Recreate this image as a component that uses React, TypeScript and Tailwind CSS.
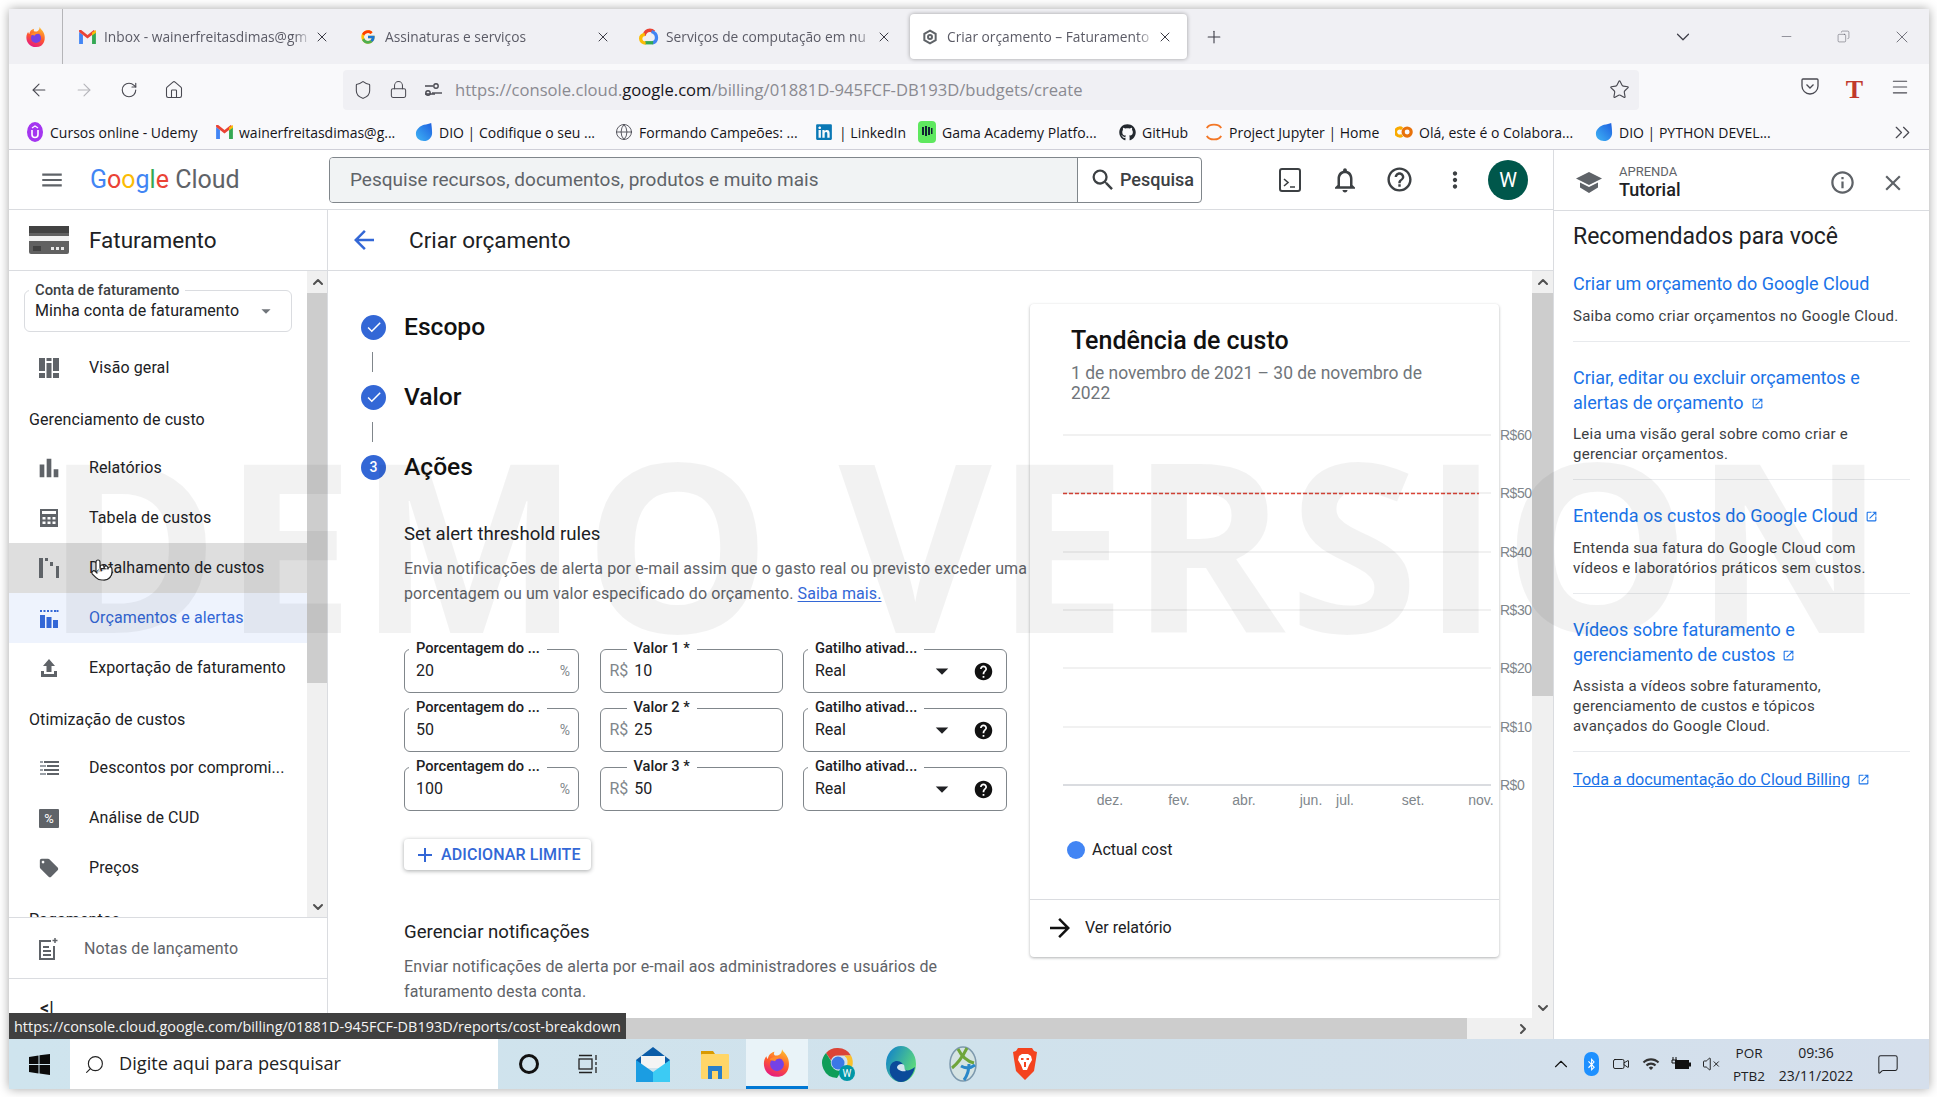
import React from "react";
import { ArrowLeft, ArrowRight, RotateCw, Home, Shield, Lock, Star, Menu, ChevronDown, ChevronUp, ChevronRight, ChevronsRight, Plus, X, Minus, Globe, Copy, Search, Video, VolumeX, MessageSquare, Pointer } from "lucide-react";
import { FcGoogle } from "react-icons/fc";
import { FaGithub, FaLinkedin, FaBluetoothB } from "react-icons/fa";
import { MdMenu, MdSearch, MdNotificationsNone, MdHelpOutline, MdMoreVert, MdArrowBack, MdArrowForward, MdCheck, MdAdd, MdHelp, MdArrowDropDown, MdInfoOutline, MdClose, MdOpenInNew, MdBarChart, MdLocalOffer, MdWifi } from "react-icons/md";

const Firefox = ({ s = 20 }: { s?: number }) => (
  <svg width={s} height={s} viewBox="0 0 24 24">
    <defs>
      <linearGradient id="ffg" x1="0.7" y1="0" x2="0.3" y2="1"><stop offset="0" stopColor="#ffbd2e" /><stop offset="0.5" stopColor="#ff5a2c" /><stop offset="1" stopColor="#e31587" /></linearGradient>
    </defs>
    <path fill="url(#ffg)" d="M16 1c1 2.500 3 3 4.500 6.500C23 13 21.500 23 12 23 5 23 1.500 17.500 1.500 12.500c0-2.500.8-4.500 2-6 .2 1 .6 1.800 1.200 2.300C5 6 7 3.500 10 3c-.8 1.500-.5 2.500.5 3 2.500.5 5.500-1 5.500-5z" />
    <circle cx="12" cy="13" r="5.500" fill="#7542e5" />
    <path fill="#ff8a2c" d="M6 9c2-2 7-3 10-.5-3-.5-5 .5-5.500 2C9 10 7 10 6 9z" />
  </svg>
);
const Gmail = () => (
  <svg width="17" height="14" viewBox="0 0 24 20">
    <path fill="#4285f4" d="M0 3v17h5.500V7z" />
    <path fill="#34a853" d="M24 3v17h-5.500V7z" />
    <path fill="#ea4335" d="M0 3l12 9 12-9-3-3-9 7-9-7-3 0z" />
    <path fill="#fbbc04" d="M18.500 3.500L24 0v4l-5.500 4z" />
  </svg>
);
const CloudLogo = () => (
  <svg width="20" height="17" viewBox="0 0 24 20" fill="none" strokeWidth="4">
    <path stroke="#ea4335" d="M6 9c1-4 4-6.500 7-6.500 2 0 4 1 5 2" />
    <path stroke="#4285f4" d="M15 4c3.500 1 6 3.500 6 7.500 0 3-2 5.500-5 6" />
    <path stroke="#34a853" d="M17 17.500H7" />
    <path stroke="#fbbc04" d="M8 18C4.500 18 2 15.500 2 12.500 2 10 4 8 7 7.500" />
  </svg>
);
const HexGear = () => (
  <svg width="16" height="16" viewBox="0 0 24 24" fill="none" stroke="#5f6368" strokeWidth="3">
    <path d="M12 2.500l8.500 4.800v9.400L12 21.500l-8.500-4.800V7.300z" />
    <circle cx="12" cy="12" r="3" />
  </svg>
);
const Udemy = () => (
  <svg width="16" height="22" viewBox="0 0 16 22">
    <ellipse cx="8" cy="11" rx="8" ry="10" fill="#a435f0" />
    <path d="M5 9v4.500a3 3 0 0 0 6 0V9" fill="none" stroke="#fff" strokeWidth="1.600" />
    <path d="M5 7l3-2 3 2" fill="none" stroke="#fff" strokeWidth="1.200" />
  </svg>
);
const Dio = () => (
  <svg width="20" height="22" viewBox="0 0 20 22">
    <defs><linearGradient id="diog" x1="1" y1="0" x2="0" y2="1"><stop offset="0" stopColor="#1e5fe0" /><stop offset="1" stopColor="#3fb5f5" /></linearGradient></defs>
    <path fill="url(#diog)" d="M18 1c0 0 1 6 1 11 0 5-4 9-9 9S1 18 1 13s5-9 9-10c3-.7 6-1 8-2z" />
  </svg>
);
const Gama = () => (
  <svg width="18" height="22" viewBox="0 0 18 22">
    <rect x="0" y="0" width="18" height="22" rx="4" fill="#5fe85f" />
    <rect x="4" y="6" width="2" height="8" fill="#123" /><rect x="7" y="5" width="2" height="10" fill="#123" /><rect x="10" y="6" width="2" height="8" fill="#123" /><rect x="13" y="7" width="1.500" height="6" fill="#123" />
  </svg>
);
const Jupyter = () => (
  <svg width="19" height="22" viewBox="0 0 19 22" fill="none">
    <path d="M2 7c2-5 13-5 15 0" stroke="#f37726" strokeWidth="2" />
    <path d="M2 15c2 5 13 5 15 0" stroke="#f37726" strokeWidth="2" />
  </svg>
);
const Colab = () => (
  <svg width="20" height="14" viewBox="0 0 20 14" fill="none" strokeWidth="3.500">
    <path d="M8 3.500a4.500 4.500 0 1 0 0 7" stroke="#f9ab00" />
    <circle cx="13.500" cy="7" r="4.500" stroke="#e8710a" />
  </svg>
);
const Chrome = () => (
  <svg width="34" height="34" viewBox="0 0 34 34">
    <path fill="#db4437" d="M16 1a15 15 0 0 1 13 7.500H16a7 7 0 0 0-7 5L4 6a15 15 0 0 1 12-5z" />
    <path fill="#fbc02d" d="M29 8.500a15 15 0 0 1 1 12L24 20a8 8 0 0 0-2-11.500z" />
    <path fill="#0f9d58" d="M4 6a15 15 0 0 0 11 25l5-8a8 8 0 0 1-11-9z" />
    <circle cx="16" cy="16" r="6.500" fill="#3b78e7" />
    <circle cx="25" cy="26" r="8" fill="#0097a7" />
    <text x="25" y="30" fontSize="10" fill="#fff" textAnchor="middle" fontFamily="Roboto">W</text>
  </svg>
);
const Edge = () => (
  <svg width="32" height="38" viewBox="0 0 32 38">
    <defs><linearGradient id="edg" x1="0" y1="0" x2="1" y2="0.6"><stop offset="0" stopColor="#0c7bd0" /><stop offset="1" stopColor="#5fdc7a" /></linearGradient></defs>
    <ellipse cx="16" cy="19" rx="15" ry="18" fill="url(#edg)" />
    <path fill="#0b4a9a" d="M5 22c1-6 8-8 12-4 2 3 1 6 3 7 3 1 6 0 10-3-2 9-8 15-14 15C10 37 3 30 5 22z" />
    <path fill="#d3e4ee" d="M12 22c1-3 5-4 7-2 1 3 0 4 2 6-4 1-9-1-9-4z" />
  </svg>
);
const GlobeApp = () => (
  <svg width="28" height="36" viewBox="0 0 28 36" fill="none">
    <ellipse cx="14" cy="18" rx="13" ry="17" fill="#d5e3e3" stroke="#7d99ad" strokeWidth="1.500" />
    <path d="M3 22C8 18 14 10 18 2" stroke="#6fa53a" strokeWidth="3" />
    <path d="M9 3c3 6 8 12 16 14" stroke="#6fa53a" strokeWidth="3" />
    <path d="M12 20c5 3 10 2 14-1M20 18c0 6-2 12-5 16" stroke="#2b88c9" strokeWidth="3" />
  </svg>
);
const Brave = () => (
  <svg width="26" height="34" viewBox="0 0 26 34">
    <path fill="#f4431f" d="M6 1h14l2 3 3 1-1 7-2 12-9 9-9-9-2-12-1-7 3-1z" />
    <path fill="#fff" d="M7 9l3-2h6l3 2 1 4-3 5-2 5h-4l-2-5-3-5z" />
    <path fill="#f4431f" d="M9 11h2.500v2H9zM14.500 11H17v2h-2.500zM12 15h2v5h-2z" />
  </svg>
);
const MailApp = () => (
  <svg width="34" height="36" viewBox="0 0 34 36">
    <path fill="#0a5ca8" d="M0 14L17 1l17 13v4H0z" />
    <path fill="#f4f4f4" d="M5 10h24v12H5z" />
    <path fill="#1b9de2" d="M0 14l17 12v10H0z" />
    <path fill="#3ccbf4" d="M34 14L17 26v10h17z" />
  </svg>
);
const FolderApp = () => (
  <svg width="28" height="30" viewBox="0 0 28 30">
    <path fill="#d99a00" d="M0 2h12l2 3h0v3H0z" />
    <rect x="0" y="5" width="28" height="25" rx="1" fill="#ffd668" />
    <path fill="#2a7fc9" d="M7 17h14v13h-4v-8h-6v8H7z" />
  </svg>
);
const WinLogo = () => (
  <svg width="21" height="21" viewBox="0 0 21 21"><path fill="#0b0b0b" d="M0 3l9.500-1.500v8.500H0zM10.500 1.300L21 0v10h-10.500zM0 11h9.500v8.500L0 18zM10.500 11H21v10l-10.500-1.500z" /></svg>
);
const Bar = ({ x, y, w, h, c = "#5f6368" }: { x: number; y: number; w: number; h: number; c?: string }) => <rect x={x} y={y} width={w} height={h} fill={c} />;
const IcOverview = () => (
  <svg width="24" height="24" viewBox="0 0 24 24"><Bar x={2} y={2} w={6} h={13} /><Bar x={2} y={17} w={6} h={5} /><Bar x={9.500} y={2} w={5} h={3} /><Bar x={9.500} y={7} w={5} h={15} /><Bar x={16} y={2} w={6} h={13} /><Bar x={16} y={17} w={6} h={5} /></svg>
);
const IcCalc = () => (
  <svg width="24" height="24" viewBox="0 0 24 24"><Bar x={3} y={3} w={18} h={18} /><Bar x={5} y={5} w={14} h={3} c="#fff" /><Bar x={5.500} y={11} w={3} h={2.500} c="#fff" /><Bar x={10.500} y={11} w={3} h={2.500} c="#fff" /><Bar x={15.500} y={11} w={3} h={2.500} c="#fff" /><Bar x={5.500} y={15.500} w={3} h={2.500} c="#fff" /><Bar x={10.500} y={15.500} w={3} h={2.500} c="#fff" /><Bar x={15.500} y={15.500} w={3} h={2.500} c="#fff" /></svg>
);
const IcWaterfall = () => (
  <svg width="24" height="24" viewBox="0 0 24 24"><Bar x={2} y={2} w={4} h={20} /><Bar x={8} y={2} w={3} h={3} /><Bar x={13} y={6} w={3} h={4} /><Bar x={19} y={10} w={3} h={12} /></svg>
);
const IcBudget = () => (
  <svg width="24" height="24" viewBox="0 0 24 24"><Bar x={3} y={9} w={5} h={13} c="#3367d6" /><Bar x={9.500} y={11} w={5} h={11} c="#3367d6" /><Bar x={16} y={14} w={5} h={8} c="#3367d6" />{[3, 6.500, 10, 13.500, 17, 19.500].map((x) => <Bar key={x} x={x} y={4} w={2} h={2} c="#3367d6" />)}</svg>
);
const IcExport = () => (
  <svg width="24" height="24" viewBox="0 0 24 24"><path fill="#5f6368" d="M12 3l6 7h-3.500v6h-5v-6H6z" /><path fill="#5f6368" d="M4 15h3v3h10v-3h3v6H4z" /></svg>
);
const IcList = () => (
  <svg width="24" height="24" viewBox="0 0 24 24"><Bar x={7} y={5} w={15} h={2} /><Bar x={10} y={9} w={12} h={2} /><Bar x={7} y={13} w={15} h={2} /><Bar x={10} y={17} w={12} h={2} /><Bar x={3} y={5} w={3} h={2} c="#9aa0a6" /><Bar x={3} y={9} w={6} h={2} c="#9aa0a6" /><Bar x={3} y={13} w={3} h={2} c="#9aa0a6" /><Bar x={3} y={17} w={6} h={2} c="#9aa0a6" /></svg>
);
const IcNotes = () => (
  <svg width="22" height="24" viewBox="0 0 22 24" fill="none" stroke="#5f6368" strokeWidth="2"><path d="M14 4H3v18h14V9" /><path d="M6 10h6M6 14h8M6 18h8" /><path d="M18 1v5M15.500 3.500h5" strokeWidth="1.500" /></svg>
);
const IcBilling = () => (
  <svg width="40" height="28" viewBox="0 0 40 28">
    <rect x="0" y="0" width="40" height="28" rx="2" fill="#616161" />
    <rect x="0" y="0" width="40" height="7" fill="#424242" />
    <rect x="0" y="10" width="40" height="5" fill="#f1f1f1" />
    <rect x="4" y="20" width="8" height="5" fill="#424242" />
    <rect x="22" y="21" width="3" height="3" fill="#e8e8e8" /><rect x="27" y="21" width="3" height="3" fill="#e8e8e8" /><rect x="32" y="21" width="3" height="3" fill="#e8e8e8" />
  </svg>
);
const IcSchool = () => (
  <svg width="28" height="24" viewBox="0 0 28 24"><path fill="#5f6368" d="M14 1L1 7.500 14 14l13-6.500z" /><path fill="#5f6368" d="M5 11.500l9 4.500 9-4.500v5L14 22l-9-5.500z" /></svg>
);
const IcTerminal = () => (
  <svg width="24" height="26" viewBox="0 0 24 26" fill="none" stroke="#3c4043" strokeWidth="2"><rect x="2" y="2" width="20" height="22" rx="2" /><path d="M6 12l4 3.500-4 3.500M12 20h5" strokeWidth="1.600" /></svg>
);
const Ext = () => <MdOpenInNew className="inline-block ml-[7px] align-[-1px]" size={13} />;

const tabs = [
  { t: "Inbox - wainerfreitasdimas@gm", i: <Gmail /> },
  { t: "Assinaturas e serviços", i: <FcGoogle size={16} /> },
  { t: "Serviços de computação em nu", i: <CloudLogo /> },
];

function TabBar() {
  return (
    <div className="flex h-[55px] items-center bg-[#f0f0f4] text-[#5b5b66] [font-family:'Open_Sans',sans-serif] text-[13.750px]">
      <div className="flex h-full w-[54px] items-center justify-center border-r border-[#b5b5b8]"><Firefox s={22} /></div>
      <div className="flex ml-[4px] gap-[4px]">
        {tabs.map((x) => (
          <div key={x.t} className="flex h-[45px] w-[277px] items-center">
            <div className="flex w-[40px] justify-center shrink-0">{x.i}</div>
            <div className="w-[208px] whitespace-nowrap overflow-hidden ml-[-3px] pt-[1px] [mask-image:linear-gradient(to_right,black_190px,transparent)]">{x.t}</div>
            <X size={16} className="ml-[2px] text-[#3b3b45]" strokeWidth={1.500} />
          </div>
        ))}
        <div className="flex h-[45px] w-[277px] items-center rounded-[4px] bg-white shadow-[0_0_4px_rgba(0,0,0,0.35)]">
          <div className="flex w-[40px] justify-center shrink-0"><HexGear /></div>
          <div className="w-[208px] whitespace-nowrap overflow-hidden ml-[-3px] pt-[1px] [mask-image:linear-gradient(to_right,black_190px,transparent)]">Criar orçamento – Faturamento</div>
          <X size={16} className="ml-[2px] text-[#3b3b45]" strokeWidth={1.500} />
        </div>
      </div>
      <Plus size={20} strokeWidth={1.300} className="ml-[17px] text-[#3b3b45]" />
      <ChevronDown size={22} strokeWidth={1.300} className="ml-[448px] text-[#3b3b45]" />
      <Minus size={15} strokeWidth={1} className="ml-[85px] text-[#5b5b66]" />
      <Copy size={13} strokeWidth={1} className="ml-[43px] text-[#5b5b66] -scale-x-100" />
      <X size={20} strokeWidth={1} className="ml-[42px] text-[#5b5b66]" />
    </div>
  );
}

function NavBar() {
  const sl = "flex w-[45px] justify-center text-[#4a4a52]";
  return (
    <div className="flex h-[51px] items-center bg-[#f9f9fb] pl-[7px] pr-[7px] [font-family:'Open_Sans',sans-serif]">
      <div className={sl}><ArrowLeft size={20} strokeWidth={1.300} /></div>
      <div className={sl}><ArrowRight size={20} strokeWidth={1.300} className="text-[#b5b5ba]" /></div>
      <div className={sl}><RotateCw size={18} strokeWidth={1.500} /></div>
      <div className={sl}><Home size={20} strokeWidth={1.300} /></div>
      <div className="ml-[147px] flex h-[40px] w-[1296px] items-center rounded-[4px] bg-[#f0f0f4] pl-[10px] pr-[9px] text-[16.600px]">
        <Shield size={20} strokeWidth={1.300} className="text-[#4a4a52]" />
        <Lock size={19} strokeWidth={1.300} className="ml-[16px] text-[#4a4a52]" />
        <svg width="20" height="16" viewBox="0 0 20 16" fill="none" stroke="#4a4a52" strokeWidth="1.400" className="ml-[16px]"><circle cx="12" cy="4" r="2.200" /><path d="M1 4h8M1 12h10" /><circle cx="4" cy="11" r="2.200" /><path d="M8 11h10" /></svg>
        <div className="ml-[11px] pt-[1px] text-[#8a8a91] whitespace-nowrap">https://console.cloud.<span className="text-[#15141a]">google.com</span>/billing/01881D-945FCF-DB193D/budgets/create</div>
        <Star size={21} strokeWidth={1.300} className="ml-auto text-[#4a4a52]" />
      </div>
      <div className="ml-auto flex">
        <div className={sl}><svg width="18" height="18" viewBox="0 0 18 18" fill="none" stroke="#4a4a52" strokeWidth="1.300"><path d="M2 2h14a1 1 0 0 1 1 1v6a8 8 0 0 1-16 0V3a1 1 0 0 1 1-1z" /><path d="M5.500 7.500L9 11l3.500-3.500" /></svg></div>
        <div className={sl}><span className="[font-family:'Liberation_Serif',serif] text-[26px] leading-none text-[#c0392b] font-bold">T</span></div>
        <div className={sl}><Menu size={20} strokeWidth={1.300} /></div>
      </div>
    </div>
  );
}

const bookmarks = [
  { w: "w-[189px]", i: <Udemy />, t: "Cursos online - Udemy" },
  { w: "w-[200px]", i: <Gmail />, t: "wainerfreitasdimas@g..." },
  { w: "w-[200px]", i: <Dio />, t: "DIO | Codifique o seu ..." },
  { w: "w-[200px]", i: <Globe size={18} strokeWidth={1.200} className="text-[#4a4a52]" />, t: "Formando Campeões: ..." },
  { w: "w-[103px]", i: <FaLinkedin size={18} className="text-[#0a78b5]" />, t: "| LinkedIn" },
  { w: "w-[200px]", i: <Gama />, t: "Gama Academy Platfo..." },
  { w: "w-[87px]", i: <FaGithub size={17} className="text-[#24292f]" />, t: "GitHub" },
  { w: "w-[190px]", i: <Jupyter />, t: "Project Jupyter | Home" },
  { w: "w-[200px]", i: <Colab />, t: "Olá, este é o Colabora..." },
  { w: "w-[200px]", i: <Dio />, t: "DIO | PYTHON DEVEL..." },
];

function Bookmarks() {
  return (
    <div className="flex h-[35px] items-center border-b border-[#cfcfd8] bg-[#f9f9fb] pl-[17px] pr-[14px] text-[14px] text-[#15141a] [font-family:'Open_Sans',sans-serif]">
      {bookmarks.map((b, i) => (
        <div key={i} className={"flex items-center whitespace-nowrap " + b.w}>
          <div className="flex w-[18px] shrink-0 justify-center">{b.i}</div>
          <span className="ml-[6px]">{b.t}</span>
        </div>
      ))}
      <ChevronsRight size={25} strokeWidth={1.200} className="ml-auto text-[#4a4a52]" />
    </div>
  );
}

const NavRow = ({ icon, text, active, hover }: { icon: React.ReactNode; text: string; active?: boolean; hover?: boolean }) => (
  <div className={"flex h-[50px] shrink-0 items-center " + (active ? "bg-[#eef3fd] text-[#3367d6]" : hover ? "bg-[#dedede] text-[#202124]" : "text-[#202124]")}>
    <div className="flex w-[80px] shrink-0 justify-center">{icon}</div>
    <span className="whitespace-nowrap">{text}</span>
  </div>
);

const SectionHead = ({ text }: { text: string }) => (
  <div className="flex h-[50px] shrink-0 items-center pl-[20px] pt-[4px] whitespace-nowrap text-[#202124]">{text}</div>
);

const ScrollV = ({ thumb }: { thumb: string }) => (
  <div className="flex w-[21px] shrink-0 flex-col bg-[#f0f0f0]">
    <div className="flex h-[22px] shrink-0 items-center justify-center"><ChevronUp size={16} strokeWidth={3} className="text-[#505050]" /></div>
    <div className={"shrink-0 bg-[#cdcdcd] " + thumb} />
    <div className="flex flex-1 items-end justify-center pb-[2px]"><ChevronDown size={16} strokeWidth={3} className="text-[#505050]" /></div>
  </div>
);

function Sidebar() {
  return (
    <div className="flex w-[319px] shrink-0 flex-col border-r border-[#dadce0] text-[16px] tracking-[0.100px]">
      <div className="flex h-[61px] shrink-0 items-center border-b border-[#dadce0] pl-[20px]">
        <IcBilling />
        <span className="ml-[20px] pt-[2px] text-[22.500px] tracking-normal text-[#202124]">Faturamento</span>
      </div>
      <div className="flex h-[646px] shrink-0 overflow-hidden">
        <div className="flex w-[298px] shrink-0 flex-col overflow-hidden">
          <div className="relative mx-[15px] mt-[19px] mb-[11px] h-[42px] shrink-0 rounded-[6px] border border-[#dadce0]">
            <span className="absolute left-[4px] top-[-10px] whitespace-nowrap bg-white px-[6px] text-[14.800px] tracking-normal font-medium leading-[18px] text-[#3c4043]">Conta de faturamento</span>
            <div className="flex h-full items-center pl-[10px] pr-[14px] text-[#202124]">
              Minha conta de faturamento
              <MdArrowDropDown size={22} className="ml-auto text-[#70757a]" />
            </div>
          </div>
          <NavRow icon={<IcOverview />} text="Visão geral" />
          <SectionHead text="Gerenciamento de custo" />
          <NavRow icon={<MdBarChart size={28} color="#5f6368" />} text="Relatórios" />
          <NavRow icon={<IcCalc />} text="Tabela de custos" />
          <NavRow icon={<IcWaterfall />} text="Detalhamento de custos" hover />
          <NavRow icon={<IcBudget />} text="Orçamentos e alertas" active />
          <NavRow icon={<IcExport />} text="Exportação de faturamento" />
          <SectionHead text="Otimização de custos" />
          <NavRow icon={<IcList />} text="Descontos por compromi..." />
          <NavRow icon={<div className="flex h-[19px] w-[20px] items-center justify-center rounded-[1px] bg-[#5f6368] text-[13px] leading-none text-white">%</div>} text="Análise de CUD" />
          <NavRow icon={<MdLocalOffer size={22} color="#5f6368" />} text="Preços" />
          <SectionHead text="Pagamentos" />
        </div>
        <ScrollV thumb="h-[390px]" />
      </div>
      <div className="flex h-[62px] shrink-0 items-center border-y border-[#dadce0] pt-[1px] text-[#5f6368]">
        <div className="flex w-[75px] justify-center pl-[3px]"><IcNotes /></div>
        Notas de lançamento
      </div>
      <div className="flex-1 pl-[31px] pt-[20px] text-[18px] leading-none text-[#202124]">
        <span className="font-medium">&lt;|</span>
      </div>
    </div>
  );
}

const Field = ({ label, notch, pre, val, suf, sel }: { label: string; notch: string; pre?: string; val: string; suf?: string; sel?: boolean }) => (
  <div className="relative flex h-[44px] items-center rounded-[6px] border border-[#80868b] text-[16px] text-[#202124]">
    <span className={"absolute top-[-11px] whitespace-nowrap bg-white px-[7px] text-[14.650px] font-medium leading-[18px] " + notch}>{label}</span>
    {pre && <span className="ml-[9px] text-[#80868b]">{pre}</span>}
    <span className={pre ? "ml-[6px]" : "ml-[11px]"}>{val}</span>
    {suf && <span className="ml-auto mr-[8px] text-[#80868b] text-[14px]">{suf}</span>}
    {sel && <MdArrowDropDown size={30} className="ml-auto text-[#202124]" />}
    {sel && <MdHelp size={21} className="ml-[16px] mr-[12px] text-[#111]" />}
  </div>
);

const Step = ({ n, title, line }: { n?: string; title: string; line?: boolean }) => (
  <div>
    <div className="flex h-[24px] items-center">
      <div className="flex h-[25px] w-[25px] items-center justify-center rounded-full bg-[#3367d6] text-[14px] font-medium text-white">
        {n ? n : <MdCheck size={18} color="#fff" />}
      </div>
      <span className="ml-[18px] text-[24.600px] font-medium text-[#111]">{title}</span>
    </div>
    {line && <div className="ml-[11px] mt-[13px] mb-[13px] h-[20px] w-px bg-[#80868b]" />}
  </div>
);

function Form() {
  return (
    <div className="w-[702px] shrink-0 pl-[33px] pt-[44px]">
      <Step title="Escopo" line />
      <Step title="Valor" line />
      <Step n="3" title="Ações" />
      <div className="ml-[43px] mt-[43px] text-[18.600px] leading-[24px] text-[#202124] whitespace-nowrap">Set alert threshold rules</div>
      <div className="ml-[43px] mt-[10px] w-[640px] text-[16px] leading-[25px] tracking-[0.100px] text-[#5f6368] whitespace-nowrap">
        Envia notificações de alerta por e-mail assim que o gasto real ou previsto exceder uma<br />
        porcentagem ou um valor especificado do orçamento. <span className="text-[#3367d6] underline underline-offset-2">Saiba mais.</span>
      </div>
      <div className="ml-[43px] mt-[43px] grid grid-cols-[175px_183px_204px] gap-x-[20.500px] gap-y-[15px]">
        {[["20", "1", "10"], ["50", "2", "25"], ["100", "3", "50"]].flatMap(([p, n, v]) => [
          <Field key={p + "a"} label="Porcentagem do ..." notch="left-[4px]" val={p} suf="%" />,
          <Field key={p + "b"} label={"Valor " + n + " *"} notch="left-[26px]" pre="R$" val={v} />,
          <Field key={p + "c"} label="Gatilho ativad..." notch="left-[4px]" val="Real" sel />,
        ])}
      </div>
      <div className="ml-[43px] mt-[28px] flex h-[31px] w-[187px] items-center rounded-[4px] bg-white text-[16px] font-medium tracking-[0.100px] text-[#3367d6] shadow-[0_1px_4px_rgba(60,64,67,0.45)]">
        <MdAdd size={24} className="ml-[9px]" />
        <span className="ml-[4px] whitespace-nowrap">ADICIONAR LIMITE</span>
      </div>
      <div className="ml-[43px] mt-[50px] text-[18.600px] leading-[24px] text-[#202124]">Gerenciar notificações</div>
      <div className="ml-[43px] mt-[10px] text-[16px] leading-[25px] tracking-[0.100px] text-[#5f6368] whitespace-nowrap">
        Enviar notificações de alerta por e-mail aos administradores e usuários de<br />faturamento desta conta.
      </div>
    </div>
  );
}

function Chart() {
  const ys = [[15, "R$60"], [73, "R$50"], [132, "R$40"], [190, "R$30"], [248, "R$20"], [307, "R$10"], [365, "R$0"]] as [number, string][];
  const xs = [[80, "dez."], [149, "fev."], [214, "abr."], [281, "jun."], [315, "jul."], [383, "set."], [451, "nov."]] as [number, string][];
  return (
    <svg width="510" height="400" viewBox="0 0 510 400" className="mt-[17px] block overflow-visible [font-family:'Liberation_Sans',sans-serif]">
      {ys.map(([y, l]) => (
        <g key={l}>
          <line x1="33" x2="461" y1={y} y2={y} stroke={l === "R$0" ? "#dadce0" : "#ececec"} strokeWidth={l === "R$0" ? 2 : 1.500} />
          <text x="470" y={y + 5} fontSize="14" letterSpacing="-0.5" fill="#80868b">{l}</text>
        </g>
      ))}
      <line x1="33" x2="449" y1="73.500" y2="73.500" stroke="#db4437" strokeWidth="1.300" strokeDasharray="4 2" />
      {xs.map(([x, l]) => <text key={l} x={x} y="385" fontSize="14" fill="#80868b" textAnchor="middle">{l}</text>)}
    </svg>
  );
}

function Card() {
  return (
    <div className="mt-[33px] flex h-[653px] w-[469px] shrink-0 flex-col rounded-[4px] bg-white shadow-[0_1px_3px_rgba(60,64,67,0.4)]">
      <div className="pl-[41px] pt-[21px] pr-[30px]">
        <div className="text-[25px] font-medium leading-[32px] text-[#111]">Tendência de custo</div>
        <div className="mt-[6px] text-[17.450px] leading-[20px] text-[#70757a]">1 de novembro de 2021 – 30 de novembro de<br />2022</div>
      </div>
      <Chart />
      <div className="mt-[18px] flex h-[24px] items-center pl-[37px] text-[16px] text-[#202124]">
        <div className="h-[18px] w-[18px] rounded-full bg-[#4285f4]" />
        <span className="ml-[7px]">Actual cost</span>
      </div>
      <div className="mt-auto flex h-[58px] items-center border-t border-[#dadce0] pb-[2px] pl-[15px] text-[16px] text-[#202124]">
        <MdArrowForward size={30} color="#111" />
        <span className="ml-[10px]">Ver relatório</span>
      </div>
    </div>
  );
}

function Main() {
  return (
    <div className="flex min-w-0 flex-1 flex-col">
      <div className="flex h-[61px] shrink-0 items-center border-b border-[#dadce0] pl-[21px]">
        <MdArrowBack size={30} color="#3367d6" />
        <span className="ml-[30px] pt-[2px] text-[22.500px] text-[#202124]">Criar orçamento</span>
      </div>
      <div className="flex h-[747px] shrink-0">
        <div className="flex min-w-0 flex-1 overflow-hidden">
          <Form />
          <Card />
        </div>
        <ScrollV thumb="h-[403px]" />
      </div>
      <div className="flex h-[21px] shrink-0 bg-[#f0f0f0]">
        <div className="w-[1139px] bg-[#cdcdcd]" />
        <div className="ml-auto flex w-[60px] items-center justify-center"><ChevronRight size={16} strokeWidth={3} className="text-[#505050]" /></div>
      </div>
    </div>
  );
}

function HelpItem({ link, desc }: { link: React.ReactNode; desc: React.ReactNode }) {
  return (
    <div className="border-b border-[#e8eaed] pb-[15px] pt-[23px]">
      <div className="text-[18px] leading-[25px] text-[#1a73e8]">{link}</div>
      <div className="mt-[9.500px] text-[15px] leading-[20px] tracking-[0.250px] text-[#3c4043] whitespace-nowrap">{desc}</div>
    </div>
  );
}

function Panel() {
  return (
    <div className="flex w-[376px] shrink-0 flex-col border-l border-[#dadce0]">
      <div className="flex h-[61px] shrink-0 items-center border-b border-[#dadce0] pl-[21px] pt-[5px]">
        <IcSchool />
        <div className="ml-[16px] leading-none">
          <div className="text-[13px] leading-[15px] text-[#5f6368]">APRENDA</div>
          <div className="text-[18px] leading-[22px] font-medium text-[#202124]">Tutorial</div>
        </div>
        <MdInfoOutline size={27} color="#5f6368" className="ml-auto" />
        <MdClose size={26} color="#5f6368" className="ml-[24px] mr-[23px]" />
      </div>
      <div className="px-[19px]">
        <div className="mt-[12px] whitespace-nowrap text-[23px] leading-[28px] text-[#202124]">Recomendados para você</div>
        <div className="-mt-[3px]">
          <HelpItem link="Criar um orçamento do Google Cloud" desc="Saiba como criar orçamentos no Google Cloud." />
          <HelpItem link={<>Criar, editar ou excluir orçamentos e<br />alertas de orçamento<Ext /></>} desc={<>Leia uma visão geral sobre como criar e<br />gerenciar orçamentos.</>} />
          <HelpItem link={<>Entenda os custos do Google Cloud<Ext /></>} desc={<>Entenda sua fatura do Google Cloud com<br />vídeos e laboratórios práticos sem custos.</>} />
          <HelpItem link={<>Vídeos sobre faturamento e<br />gerenciamento de custos<Ext /></>} desc={<>Assista a vídeos sobre faturamento,<br />gerenciamento de custos e tópicos<br />avançados do Google Cloud.</>} />
        </div>
        <div className="mt-[16px] text-[16.200px] leading-[24px] text-[#1a73e8]"><span className="underline">Toda a documentação do Cloud Billing</span><Ext /></div>
      </div>
    </div>
  );
}

function TopBar() {
  return (
    <div className="flex h-[60px] shrink-0 items-center border-b border-[#dadce0] pl-[30px]">
      <MdMenu size={26} color="#5f6368" />
      <div className="ml-[25px] w-[161px] whitespace-nowrap text-[25px]">
        <span className="text-[#4285f4]">G</span><span className="text-[#ea4335]">o</span><span className="text-[#fbbc04]">o</span><span className="text-[#4285f4]">g</span><span className="text-[#34a853]">l</span><span className="text-[#ea4335]">e</span><span className="text-[#5f6368]"> Cloud</span>
      </div>
      <div className="ml-[78px] flex h-[46px] w-[873px] overflow-hidden rounded-[4px] border border-[#80868b]">
        <div className="flex flex-1 items-center border-r border-[#80868b] bg-[#f1f3f4] pl-[20px] pt-[1px] text-[19px] text-[#5f6368]">Pesquise recursos, documentos, produtos e muito mais</div>
        <div className="flex w-[123px] items-center pl-[11px] text-[18px] font-medium text-[#3c4043]">
          <MdSearch size={28} />
          <span className="ml-[3px]">Pesquisa</span>
        </div>
      </div>
      <div className="ml-[76px]"><IcTerminal /></div>
      <MdNotificationsNone size={30} color="#3c4043" className="ml-[28px]" />
      <MdHelpOutline size={29} color="#3c4043" className="ml-[25px]" />
      <MdMoreVert size={26} color="#3c4043" className="ml-[28px]" />
      <div className="ml-[20px] flex h-[40px] w-[40px] items-center justify-center rounded-full bg-[#00574b] text-[20px] text-white">W</div>
    </div>
  );
}

function Taskbar() {
  const slot = "flex h-full w-[62px] items-center justify-center";
  const tray = "flex h-full w-[30px] items-center justify-center text-[#111]";
  return (
    <div className="flex h-[50px] shrink-0 items-center bg-[linear-gradient(90deg,#cfe4ee,#d0e2ec_50%,#d5dfec)] [font-family:'Open_Sans',sans-serif] text-[#202124]">
      <div className="flex h-full w-[61px] items-center justify-center"><WinLogo /></div>
      <div className="flex h-full w-[428px] items-center bg-white pl-[14px] text-[#222]">
        <Search size={21} strokeWidth={1.300} className="-scale-x-100" />
        <span className="ml-[14px] text-[18.200px]">Digite aqui para pesquisar</span>
      </div>
      <div className={slot}><div className="h-[20px] w-[20px] rounded-full border-[3px] border-[#111]" /></div>
      <div className="flex h-full w-[56px] items-center justify-center">
        <svg width="22" height="22" viewBox="0 0 22 22" fill="none" stroke="#222" strokeWidth="1.300"><rect x="2" y="6" width="13" height="10" /><path d="M2 2.500h13M2 19.500h13M19 2v5M19 9v3M19 14v6" /></svg>
      </div>
      <div className="ml-[6px] flex h-full">
        <div className={slot}><MailApp /></div>
        <div className={slot}><FolderApp /></div>
        <div className={slot + " border-b-[3px] border-[#0078d4] bg-[#e9f3f8]"}><Firefox s={30} /></div>
        <div className={slot}><Chrome /></div>
        <div className={slot}><Edge /></div>
        <div className={slot}><GlobeApp /></div>
        <div className={slot}><Brave /></div>
      </div>
      <div className="ml-auto flex h-full items-center text-[13.500px]">
        <div className={tray}><ChevronUp size={22} strokeWidth={1.200} /></div>
        <div className={tray}><div className="flex h-[24px] w-[15px] items-center justify-center rounded-[7px] bg-[#1e90ff] text-white"><FaBluetoothB size={13} /></div></div>
        <div className={tray}><Video size={18} strokeWidth={1.200} /></div>
        <div className={tray}><MdWifi size={18} className="text-[#333]" /></div>
        <div className={tray}><svg width="20" height="14" viewBox="0 0 20 14"><rect x="4" y="3" width="14" height="9" fill="#111" /><rect x="18" y="5.500" width="2" height="4" fill="#111" /><path d="M2 0v3M5 0v3M1 3h5v3H1z" fill="none" stroke="#111" /></svg></div>
        <div className={tray}><VolumeX size={18} strokeWidth={1.200} /></div>
        <div className="flex h-full w-[46px] flex-col items-center justify-center gap-[5px] leading-[18px]"><span>POR</span><span>PTB2</span></div>
        <div className="flex h-full w-[88px] flex-col items-center justify-center gap-[5px] whitespace-nowrap text-[14px] leading-[18px]"><span>09:36</span><span>23/11/2022</span></div>
        <div className="flex h-full w-[56px] items-center justify-center"><MessageSquare size={22} strokeWidth={1.100} /></div>
        <div className="w-[13px]" />
      </div>
    </div>
  );
}

export default function App() {
  return (
    <div className="h-[1097px] w-[1937px] overflow-hidden bg-white pl-[9px] pt-[9px] [font-family:Roboto,sans-serif]">
      <div className="relative flex h-[1080px] w-[1920px] flex-col overflow-hidden bg-white shadow-[0_0_10px_rgba(0,0,0,0.35)]">
        <TabBar />
        <NavBar />
        <Bookmarks />
        <div className="flex h-[889px] shrink-0">
          <div className="flex min-w-0 flex-1 flex-col">
            <TopBar />
            <div className="flex min-h-0 flex-1">
              <Sidebar />
              <Main />
            </div>
          </div>
          <Panel />
        </div>
        <Taskbar />
        <div className="pointer-events-none absolute left-[36px] top-[403px] whitespace-nowrap text-[236px] font-bold leading-[260px] tracking-[3px] text-black/5 [font-family:'Open_Sans',sans-serif]">DEMO VERSION</div>
        <Pointer size={24} strokeWidth={1.200} fill="#fff" className="absolute left-[81px] top-[549px] text-[#222]" />
        <div className="absolute bottom-[50px] left-0 flex h-[26px] w-[617px] items-center bg-[#404040] pl-[5px] pt-[2px] text-[14.450px] whitespace-nowrap text-[#f5f5f5] [font-family:'Open_Sans',sans-serif]">https://console.cloud.google.com/billing/01881D-945FCF-DB193D/reports/cost-breakdown</div>
      </div>
    </div>
  );
}
